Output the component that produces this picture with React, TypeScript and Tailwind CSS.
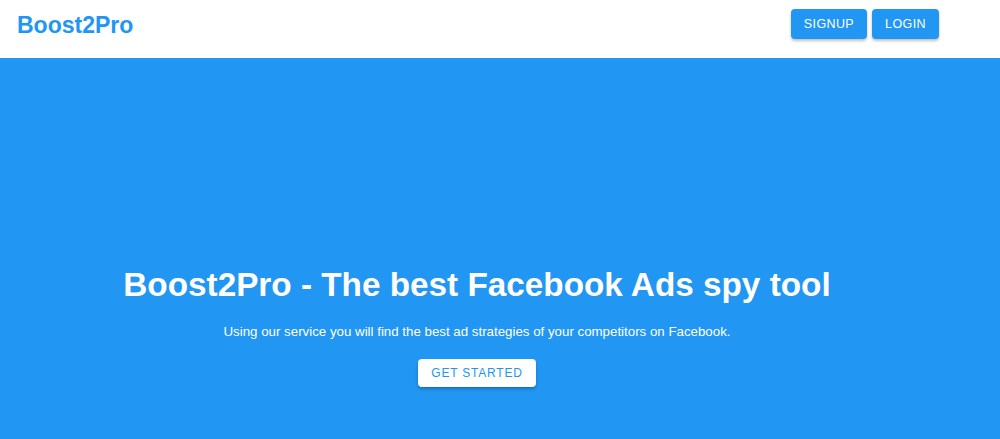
export default function App() {
  return (
    <div className="w-[1000px] h-[439px] overflow-hidden bg-white" style={{ fontFamily: '"Liberation Sans", Arial, sans-serif' }}>
      <header className="h-[58px] flex items-center justify-between pl-[17px] pr-[61px] bg-white">
        <div className="text-[23px] font-bold text-[#2196f3] -mt-[8px]">Boost2Pro</div>
        <div className="flex gap-[5px] -mt-[10px]">
          <button className="h-[30px] px-[13px] rounded-[4px] bg-[#2196f3] text-white text-[12.5px] font-medium tracking-[0.4px] shadow-[0_2px_3px_rgba(0,0,0,0.25)]">SIGNUP</button>
          <button className="h-[30px] px-[13px] rounded-[4px] bg-[#2196f3] text-white text-[12.5px] font-medium tracking-[0.4px] shadow-[0_2px_3px_rgba(0,0,0,0.25)]">LOGIN</button>
        </div>
      </header>
      <section className="h-[381px] bg-[#2196f3] flex flex-col items-center pr-[46px] pt-[207px]">
        <h1 className="text-[33.3px] leading-[40px] font-bold text-white">Boost2Pro - The best Facebook Ads spy tool</h1>
        <p className="mt-[17px] text-[13.3px] leading-[20px] text-white">Using our service you will find the best ad strategies of your competitors on Facebook.</p>
        <button className="mt-[17px] h-[28px] px-[13px] rounded-[4px] bg-white text-[#2196f3] text-[12px] tracking-[0.8px] shadow-[0_2px_3px_rgba(0,0,0,0.25)]">GET STARTED</button>
      </section>
    </div>
  );
}
